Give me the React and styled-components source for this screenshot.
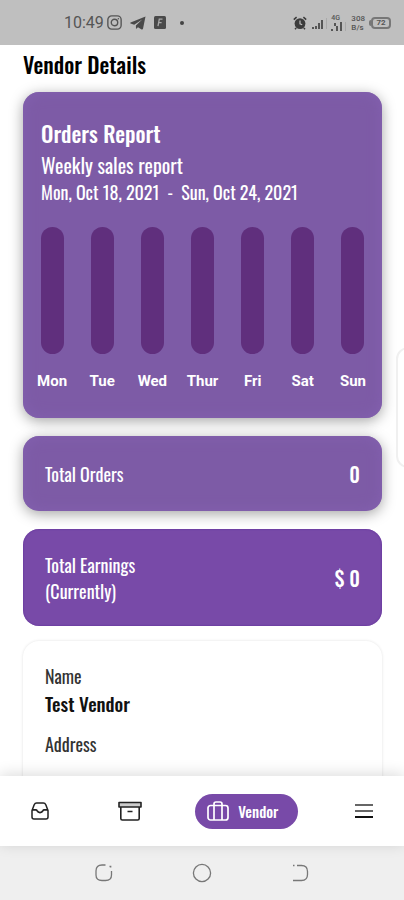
import React from 'react'
import styled, { createGlobalStyle } from 'styled-components'

const days = [
  { label: 'Mon', value: 0 },
  { label: 'Tue', value: 0 },
  { label: 'Wed', value: 0 },
  { label: 'Thur', value: 0 },
  { label: 'Fri', value: 0 },
  { label: 'Sat', value: 0 },
  { label: 'Sun', value: 0 },
]

function StatusBar() {
  return (
    <StatusContainer>
      <div className="left">
        <time>10:49</time>
        <svg width="15" height="15" viewBox="0 0 14 14" fill="none" stroke="#555">
          <rect x="0.8" y="0.8" width="12.4" height="12.4" rx="3.6" strokeWidth="1.3" />
          <circle cx="7" cy="7" r="3" strokeWidth="1.3" />
          <circle cx="10.6" cy="3.4" r="0.7" fill="#555" stroke="none" />
        </svg>
        <svg width="16" height="14" viewBox="0 0 16 14" fill="#4a4a4a">
          <path d="M15.5 0.4 0.6 6.6c-.6.3-.5.8 0 1l3.6 1.1 8-5.2-6.3 6 .1 3.4 2-1.7 3.6 2.3c.7.3 1.2 0 1.4-.7z" />
        </svg>
        <svg width="12" height="13" viewBox="0 0 12 13">
          <rect width="12" height="13" rx="1.5" fill="#4a4a4a" />
          <path d="M4 10.2 5.3 3.2h3.2M4.8 6.6h2.8" stroke="#aaa" strokeWidth="1.3" fill="none" />
        </svg>
        <i className="dot" />
      </div>
      <div className="right">
        <svg width="14" height="14" viewBox="0 0 14 14">
          <circle cx="7" cy="7.6" r="5.4" fill="#3c3c3c" />
          <path d="M0.8 3.6 3.6 1.2M13.2 3.6 10.4 1.2M3.2 12 2 13.2M10.8 12 12 13.2" stroke="#3c3c3c" strokeWidth="1.6" />
          <path d="M7 4.6v3.2l2.2 1" stroke="#bfbfbf" strokeWidth="1.2" fill="none" />
        </svg>
        <svg width="16" height="16" viewBox="0 0 16 16" fill="#555">
          <rect x="1" y="12" width="2" height="2" />
          <rect x="4" y="11" width="2" height="3" />
          <rect x="7" y="8" width="2" height="6" />
          <rect x="10" y="5" width="2" height="9" />
          <rect x="15" y="3" width="1" height="11" fill="#aaa" />
        </svg>
        <Stack $size={7}>
          <span>4G</span>
          <svg width="16" height="9" viewBox="0 0 16 9" fill="#555">
            <rect x="0" y="7" width="2" height="2" />
            <rect x="3" y="1" width="2" height="3" />
            <rect x="5" y="4" width="2" height="5" />
            <rect x="9" y="0" width="2" height="9" />
            <rect x="14" y="0" width="1" height="9" fill="#aaa" />
          </svg>
        </Stack>
        <Stack $size={8}>
          <span>308</span>
          <span>B/s</span>
        </Stack>
        <Battery>
          <span>72</span>
        </Battery>
      </div>
    </StatusContainer>
  )
}

function OrdersReport() {
  return (
    <ReportCard>
      <header>
        <h2>Orders Report</h2>
        <p className="sub">Weekly sales report</p>
        <p className="range">Mon, Oct 18, 2021 &nbsp;-&nbsp; Sun, Oct 24, 2021</p>
      </header>
      <Chart>
        {days.map((day) => (
          <li key={day.label}>
            <Track>
              <i style={{ height: `${day.value}%` }} />
            </Track>
            <span>{day.label}</span>
          </li>
        ))}
      </Chart>
    </ReportCard>
  )
}

function App() {
  return (
    <>
      <GlobalStyle />
      <Screen>
        <StatusBar />
        <Content>
          <h1>Vendor Details</h1>
          <OrdersReport />
          <StatCard>
            <span>Total Orders</span>
            <strong>0</strong>
          </StatCard>
          <StatCard $strong>
            <span>
              Total Earnings
              <br />
              (Currently)
            </span>
            <strong>$ 0</strong>
          </StatCard>
          <DetailsCard>
            <dt>Name</dt>
            <dd>Test Vendor</dd>
            <dt>Address</dt>
          </DetailsCard>
        </Content>
        <TabBar>
          <TabButton aria-label="Orders">
            <svg width="20" height="20" viewBox="0 0 20 20" fill="none" stroke="#222" strokeWidth="1.5" strokeLinejoin="round">
              <path d="M2 9.500 4.200 3.800Q5 2 6.600 2h6.800Q15 2 15.800 3.800L18 9.500V16q0 2-2 2H4q-2 0-2-2z" />
              <path d="M2 8.800h3.800q.8 0 1.200.9Q8 11.600 10 11.600t3-1.900q.4-.9 1.200-.9H18" strokeWidth="1.8" />
            </svg>
          </TabButton>
          <TabButton aria-label="Products">
            <svg width="24" height="20" viewBox="0 0 24 20" fill="none" stroke="#222" strokeWidth="1.6" strokeLinejoin="round">
              <rect x="1" y="1.500" width="22" height="4.500" fill="#ccc" />
              <path d="M2.800 6v11.500q0 1.500 1.500 1.500h15.400q1.500 0 1.500-1.500V6M9.500 10.500h5" />
            </svg>
          </TabButton>
          <ActiveTab>
            <svg width="22" height="20" viewBox="0 0 22 20" fill="none" stroke="#fff" strokeWidth="1.700">
              <rect x="1" y="4.500" width="20" height="14.500" rx="2.500" />
              <path d="M7 19V3q0-2 2-2h4q2 0 2 2v16" />
            </svg>
            Vendor
          </ActiveTab>
          <TabButton aria-label="Menu">
            <svg width="20" height="16" viewBox="0 0 20 16" strokeWidth="2">
              <path d="M1 2h18M1 8h18" stroke="#666" />
              <path d="M1 14h18" stroke="#111" />
            </svg>
          </TabButton>
        </TabBar>
        <SystemBar>
          <button aria-label="Recent apps">
            <svg width="20" height="20" viewBox="0 0 20 20">
              <path d="M11.500 2H8Q2 2 2 8v4q0 5.500 6 5.500h3.500q6 0 6-5.500V8" />
              <path d="M15.500 3.500h1.200v1" />
            </svg>
          </button>
          <button aria-label="Home">
            <svg width="20" height="20" viewBox="0 0 20 20">
              <circle cx="10" cy="10" r="8.600" />
            </svg>
          </button>
          <button aria-label="Back">
            <svg width="20" height="20" viewBox="0 0 20 20">
              <path d="M7 2.500h4.500q6 0 6 6v3q0 6-6 6H3M3 2.500h1.500" />
            </svg>
          </button>
        </SystemBar>
        <EdgePanel />
      </Screen>
    </>
  )
}

export default App

const GlobalStyle = createGlobalStyle`
  * {
    box-sizing: border-box;
    margin: 0;
    padding: 0;
  }
  body {
    background: #fff;
    color: #111;
    font-family: Oswald, 'Roboto Condensed', 'Liberation Sans Narrow', 'Liberation Sans', sans-serif;
  }
  button {
    border: none;
    background: none;
    font-family: inherit;
    cursor: pointer;
  }
`
const Screen = styled.div`
  position: relative;
  display: flex;
  flex-direction: column;
  height: 100vh;
  overflow: hidden;
`
const StatusContainer = styled.div`
  display: flex;
  flex-shrink: 0;
  justify-content: space-between;
  align-items: center;
  height: 45px;
  padding: 0 13px 0 64px;
  background: #bfbfbf;
  color: #555;
  font-family: Roboto, sans-serif;
  .left,
  .right {
    display: flex;
    align-items: center;
  }
  .left {
    gap: 8px;
    time {
      margin-right: -5px;
      font-size: 16px;
    }
  }
  .right {
    gap: 4px;
  }
  .dot {
    width: 4px;
    height: 4px;
    margin-left: 6px;
    border-radius: 50%;
    background: #444;
  }
`
const Stack = styled.div`
  display: flex;
  flex-direction: column;
  align-items: flex-start;
  font-size: ${(props) => props.$size}px;
  font-weight: 500;
  line-height: ${(props) => props.$size + 1}px;
`
const Battery = styled.div`
  display: flex;
  align-items: center;
  &::before {
    content: '';
    width: 2px;
    height: 6px;
    border-radius: 2px 0 0 2px;
    background: #777;
  }
  span {
    width: 20px;
    height: 12px;
    border: 2px solid #777;
    border-radius: 4px;
    font-size: 8px;
    font-weight: 700;
    line-height: 8px;
    text-align: center;
  }
`
const Content = styled.main`
  display: flex;
  flex: 1;
  flex-direction: column;
  gap: 18px;
  min-height: 0;
  padding: 1px 22px 0 23px;
  overflow: hidden;
  h1 {
    margin-bottom: -8px;
    color: #000;
    font-size: 22px;
    font-weight: 500;
    line-height: 36px;
  }
`
const Card = styled.section`
  flex-shrink: 0;
  border-radius: 16px;
  background: #7d5ba6;
  color: #fff;
  box-shadow: 0 3px 14px rgba(0, 0, 0, 0.36), inset 0 0 14px #8461b0;
`
const ReportCard = styled(Card)`
  padding: 24px 4px 26px;
  header {
    padding: 0 14px;
  }
  h2 {
    font-size: 22px;
    font-weight: 500;
    line-height: 34px;
  }
  .sub {
    font-size: 20px;
    line-height: 30px;
  }
  .range {
    font-size: 18px;
    line-height: 25px;
  }
`
const Chart = styled.ul`
  display: flex;
  margin-top: 22px;
  list-style: none;
  li {
    display: flex;
    flex: 1;
    flex-direction: column;
    align-items: center;
    gap: 16px;
  }
  span {
    font-family: Roboto, sans-serif;
    font-size: 15px;
    font-weight: 700;
    line-height: 22px;
  }
`
const Track = styled.div`
  display: flex;
  align-items: flex-end;
  width: 23px;
  height: 127px;
  border-radius: 12px;
  background: #602f7d;
  overflow: hidden;
  i {
    width: 100%;
    background: #fff;
  }
`
const StatCard = styled(Card)`
  display: flex;
  justify-content: space-between;
  align-items: center;
  padding: ${(props) => (props.$strong ? '23px 22px 22px' : '25px 22px 24px')};
  ${(props) => props.$strong && 'background: #784aa8; box-shadow: inset 0 0 2px #5a2896;'}
  font-size: 18px;
  line-height: 26px;
  strong {
    font-size: 20px;
    font-weight: 500;
  }
`
const DetailsCard = styled.dl`
  flex: 1 0 auto;
  margin-top: -3px;
  padding: 22px;
  border-radius: 16px 16px 0 0;
  box-shadow: 0 0 3px rgba(0, 0, 0, 0.12);
  dt {
    color: #333;
    font-size: 18px;
    line-height: 26px;
  }
  dd {
    margin-bottom: 14px;
    font-size: 19px;
    font-weight: 500;
    line-height: 28px;
  }
`
const TabBar = styled.nav`
  position: relative;
  display: flex;
  flex-shrink: 0;
  justify-content: space-between;
  align-items: center;
  height: 70px;
  padding: 0 16px;
  background: #fff;
  box-shadow: 0 -2px 14px rgba(0, 0, 0, 0.14);
`
const TabButton = styled.button`
  display: flex;
  justify-content: center;
  align-items: center;
  width: 48px;
  height: 48px;
`
const ActiveTab = styled.button`
  display: flex;
  align-items: center;
  gap: 9px;
  height: 35px;
  padding: 0 20px 0 12px;
  border-radius: 18px;
  background: #784aa8;
  color: #fff;
  font-size: 15px;
  font-weight: 500;
`
const SystemBar = styled.div`
  display: flex;
  flex-shrink: 0;
  justify-content: space-between;
  align-items: center;
  height: 54px;
  padding: 0 80px;
  background: #efefef;
  button {
    display: flex;
    justify-content: center;
    align-items: center;
    width: 48px;
    height: 48px;
  }
  svg {
    fill: none;
    stroke: #777;
    stroke-width: 1.3;
  }
`
// pull-out handle that floats over the right edge
const EdgePanel = styled.aside`
  position: absolute;
  top: 347px;
  right: -16px;
  width: 24px;
  height: 121px;
  border: 2px solid #f0f0f0;
  border-radius: 14px;
  background: #fff;
`
